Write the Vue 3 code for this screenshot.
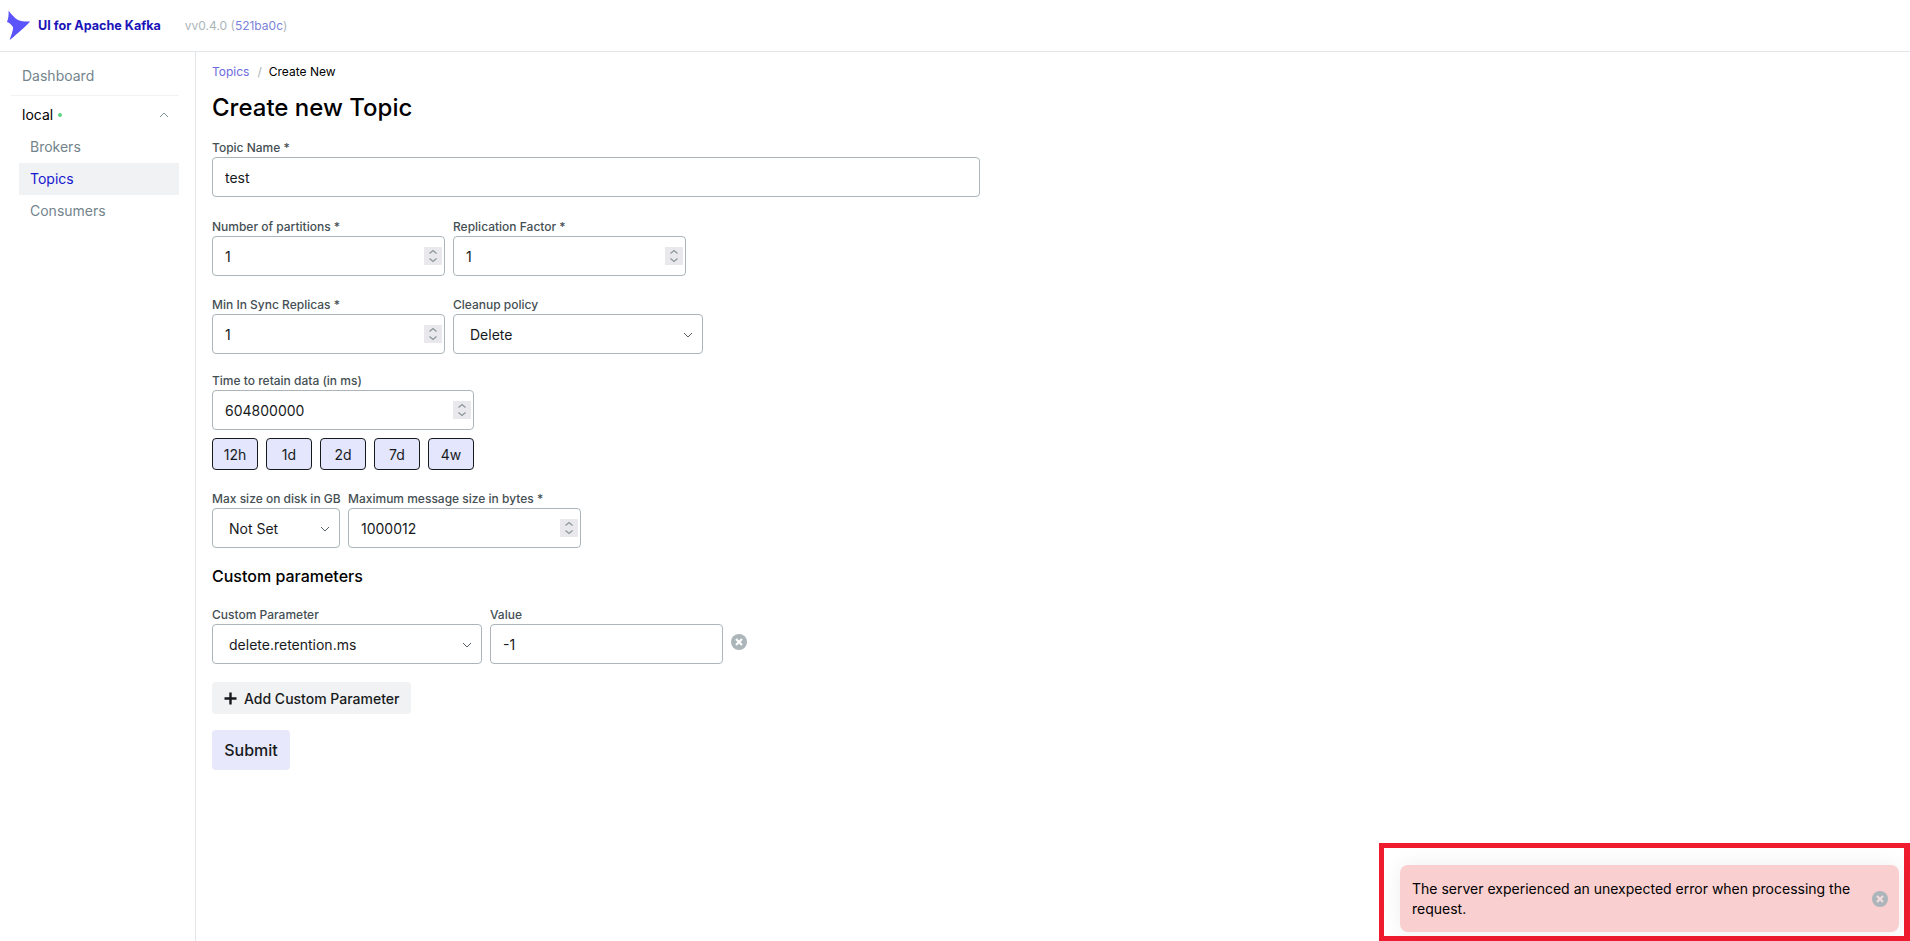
<script setup>
const durations = ['12h', '1d', '2d', '7d', '4w']
</script>

<template>
  <div class="app">
    <header class="topbar">
      <svg class="logo" viewBox="0 0 24 31" width="24" height="31">
        <path d="M1.6 0.5 C4 4 7.5 8 11 10 C15 11.5 19 11.8 23.2 11.5 C19.5 15.5 15 19.5 11 23 C8 25.5 5.5 28 2.6 30 C4 26 6 21 6.2 17.5 C4.5 14.5 2.5 13 0 12 C1.5 8.5 1.8 4.5 1.6 0.5 Z" fill="#5b53fb" />
      </svg>
      <span class="brand">UI for Apache Kafka</span>
      <span class="version">vv0.4.0 (<span class="hash">521ba0c</span>)</span>
    </header>

    <div class="body">
      <aside class="sidebar">
        <div class="nav-item dash">Dashboard</div>
        <div class="cluster">
          <span class="cluster-name">local</span>
          <span class="dot"></span>
          <svg class="chev-up" viewBox="0 0 10 6" width="10" height="6">
            <path d="M1 5 L5 1 L9 5" fill="none" stroke="#73848c" stroke-width="0.9" />
          </svg>
        </div>
        <div class="nav-item sub">Brokers</div>
        <div class="nav-item sub active">Topics</div>
        <div class="nav-item sub">Consumers</div>
      </aside>

      <main class="main">
        <nav class="crumbs">
          <a class="crumb-link">Topics</a>
          <span class="crumb-sep">/</span>
          <span class="crumb-cur">Create New</span>
        </nav>
        <h1 class="title">Create new Topic</h1>

        <form class="form">
          <div class="field r-name">
            <label class="lbl">Topic Name *</label>
            <input class="inp w-name" type="text" value="test" />
          </div>

          <div class="row r-a">
            <div class="field">
              <label class="lbl">Number of partitions *</label>
              <div class="num w-233">
                <input class="inp" type="text" value="1" />
                <span class="spin"><svg viewBox="0 0 18 18" width="18" height="18"><path d="M5.5 6.5 L9 3.5 L12.5 6.5 M5.5 11.5 L9 14.5 L12.5 11.5" fill="none" stroke="#8a9499" stroke-width="1.2" /></svg></span>
              </div>
            </div>
            <div class="field">
              <label class="lbl">Replication Factor *</label>
              <div class="num w-233">
                <input class="inp" type="text" value="1" />
                <span class="spin"><svg viewBox="0 0 18 18" width="18" height="18"><path d="M5.5 6.5 L9 3.5 L12.5 6.5 M5.5 11.5 L9 14.5 L12.5 11.5" fill="none" stroke="#8a9499" stroke-width="1.2" /></svg></span>
              </div>
            </div>
          </div>

          <div class="row r-b">
            <div class="field">
              <label class="lbl">Min In Sync Replicas *</label>
              <div class="num w-233">
                <input class="inp" type="text" value="1" />
                <span class="spin"><svg viewBox="0 0 18 18" width="18" height="18"><path d="M5.5 6.5 L9 3.5 L12.5 6.5 M5.5 11.5 L9 14.5 L12.5 11.5" fill="none" stroke="#8a9499" stroke-width="1.2" /></svg></span>
              </div>
            </div>
            <div class="field">
              <label class="lbl">Cleanup policy</label>
              <div class="sel w-250">
                <span>Delete</span>
                <svg class="chev" viewBox="0 0 10 6" width="10" height="6"><path d="M1 1 L5 5 L9 1" fill="none" stroke="#454f54" stroke-width="0.9" /></svg>
              </div>
            </div>
          </div>

          <div class="field r-c">
            <label class="lbl">Time to retain data (in ms)</label>
            <div class="num w-262">
              <input class="inp" type="text" value="604800000" />
              <span class="spin"><svg viewBox="0 0 18 18" width="18" height="18"><path d="M5.5 6.5 L9 3.5 L12.5 6.5 M5.5 11.5 L9 14.5 L12.5 11.5" fill="none" stroke="#8a9499" stroke-width="1.2" /></svg></span>
            </div>
          </div>
          <div class="durations">
            <button v-for="d in durations" :key="d" type="button" class="dur">{{ d }}</button>
          </div>

          <div class="row r-d">
            <div class="field w-128">
              <label class="lbl">Max size on disk in GB</label>
              <div class="sel">
                <span>Not Set</span>
                <svg class="chev" viewBox="0 0 10 6" width="10" height="6"><path d="M1 1 L5 5 L9 1" fill="none" stroke="#454f54" stroke-width="0.9" /></svg>
              </div>
            </div>
            <div class="field">
              <label class="lbl">Maximum message size in bytes *</label>
              <div class="num w-233">
                <input class="inp" type="text" value="1000012" />
                <span class="spin"><svg viewBox="0 0 18 18" width="18" height="18"><path d="M5.5 6.5 L9 3.5 L12.5 6.5 M5.5 11.5 L9 14.5 L12.5 11.5" fill="none" stroke="#8a9499" stroke-width="1.2" /></svg></span>
              </div>
            </div>
          </div>

          <h2 class="subtitle">Custom parameters</h2>

          <div class="row r-e">
            <div class="field">
              <label class="lbl">Custom Parameter</label>
              <div class="sel w-270">
                <span>delete.retention.ms</span>
                <svg class="chev" viewBox="0 0 10 6" width="10" height="6"><path d="M1 1 L5 5 L9 1" fill="none" stroke="#454f54" stroke-width="0.9" /></svg>
              </div>
            </div>
            <div class="field">
              <label class="lbl">Value</label>
              <input class="inp w-233" type="text" value="-1" />
            </div>
            <svg class="remove" viewBox="0 0 16 16" width="16" height="16">
              <circle cx="8" cy="8" r="8" fill="#abb5ba" />
              <path d="M5 5 L11 11 M11 5 L5 11" stroke="#fff" stroke-width="2.2" />
            </svg>
          </div>

          <button type="button" class="add">
            <svg class="plus" viewBox="0 0 13 13" width="13" height="13"><path d="M6.5 0.5 V12.5 M0.5 6.5 H12.5" stroke="#171a1c" stroke-width="2.4" /></svg>
            <span>Add Custom Parameter</span>
          </button>

          <button type="button" class="submit">Submit</button>
        </form>
      </main>
    </div>

    <div class="annot">
      <div class="toast">
        <p class="toast-text">The server experienced an unexpected error when processing the request.</p>
        <svg class="toast-x" viewBox="0 0 16 16" width="16" height="16">
          <circle cx="8" cy="8" r="8" fill="#abb5ba" />
          <path d="M5 5 L11 11 M11 5 L5 11" stroke="#f4dcdd" stroke-width="2.2" />
        </svg>
      </div>
    </div>
  </div>
</template>

<style scoped>
.app {
  height: 941px;
  display: flex;
  flex-direction: column;
  position: relative;
  overflow: hidden;
  background: #fff;
  color: #171a1c;
  font-family: Inter, "Noto Sans", sans-serif;
}
.topbar {
  height: 51px;
  flex: none;
  border-bottom: 1px solid #e3e6e8;
  display: flex;
  align-items: center;
  padding-left: 7px;
}
.logo { flex: none; }
.brand {
  margin-left: 7px;
  font-size: 12.6px;
  font-weight: 700;
  color: #1a14b8;
  white-space: nowrap;
}
.version {
  margin-left: 24px;
  font-size: 12px;
  color: #abb5ba;
  white-space: nowrap;
}
.hash { color: #7b82d8; }

.body { flex: 1; display: flex; min-height: 0; }
.sidebar {
  flex: none;
  width: 196px;
  box-sizing: border-box;
  border-right: 1px solid #e3e6e8;
  padding: 8px 16px 0 11px;
}
.nav-item {
  height: 32px;
  line-height: 32px;
  font-size: 14px;
  color: #73848c;
  white-space: nowrap;
}
.dash {
  padding-left: 11px;
  height: 35px;
  line-height: 32px;
  border-bottom: 1px solid #f1f2f3;
}
.cluster {
  height: 33px;
  margin-top: 2px;
  display: flex;
  align-items: center;
  padding-left: 11px;
  font-size: 14px;
  font-weight: 400;
}
.cluster-name { color: #000; }
.dot {
  width: 4px;
  height: 4px;
  border-radius: 50%;
  background: #5cd685;
  margin-left: 5px;
}
.chev-up { margin-left: auto; margin-right: 10px; }
.sub { margin-left: 8px; padding-left: 11px; }
.active { background: #f1f2f3; color: #1717cf; }

.main { flex: 1; padding: 12px 16px 0; min-width: 0; }
.crumbs {
  height: 16px;
  font-size: 12px;
  line-height: 16px;
  display: flex;
  align-items: center;
}
.crumb-link { color: #6b6bdc; }
.crumb-sep { color: #abb5ba; margin: 0 7px 0 8px; }
.crumb-cur { color: #000; }
.title {
  margin: 12px 0 0;
  font-size: 24px;
  line-height: 32px;
  font-weight: 500;
  color: #000;
}
.form { display: flex; flex-direction: column; align-items: flex-start; }
.field { display: flex; flex-direction: column; }
.row { display: flex; gap: 8px; }
.r-name { margin-top: 15px; }
.r-a { margin-top: 21px; }
.r-b { margin-top: 20px; }
.r-c { margin-top: 18px; }
.r-d { margin-top: 20px; }
.r-e { margin-top: 18px; }
.lbl {
  height: 17px;
  line-height: 18px;
  margin-bottom: 1px;
  font-size: 12px;
  font-weight: 500;
  color: #454f54;
  white-space: nowrap;
}
.inp {
  display: block;
  box-sizing: border-box;
  height: 40px;
  width: 100%;
  border: 1px solid #abb5ba;
  border-radius: 4px;
  padding: 0 12px;
  font: 400 14px Inter, "Noto Sans", sans-serif;
  color: #171a1c;
  background: #fff;
  outline: none;
}
.w-name { width: 768px; }
.w-233 { width: 233px; }
.w-262 { width: 262px; }
.w-250 { width: 250px; }
.w-128 { width: 128px; }
.w-270 { width: 270px; }
.num { position: relative; }
.spin {
  position: absolute;
  right: 3px;
  top: 11px;
  width: 18px;
  height: 18px;
  background: #e9e9ed;
  display: flex;
}
.sel {
  box-sizing: border-box;
  height: 40px;
  border: 1px solid #abb5ba;
  border-radius: 4px;
  padding: 0 9px 0 16px;
  display: flex;
  align-items: center;
  justify-content: space-between;
  font-size: 14px;
  color: #171a1c;
  white-space: nowrap;
}
.chev { flex: none; margin-top: 1px; }
.durations { display: flex; gap: 8px; margin-top: 8px; }
.dur {
  width: 46px;
  height: 32px;
  box-sizing: border-box;
  border: 1px solid #171a1c;
  border-radius: 4px;
  background: #e3e6fc;
  font: 400 14px Inter, "Noto Sans", sans-serif;
  color: #171a1c;
  padding: 0;
}
.subtitle {
  margin: 16px 0 0;
  font-size: 16px;
  line-height: 24px;
  font-weight: 500;
  color: #000;
}
.remove { flex: none; align-self: flex-start; margin-top: 28px; }
.add {
  margin-top: 18px;
  height: 32px;
  width: 199px;
  box-sizing: border-box;
  border: none;
  border-radius: 4px;
  background: #f1f2f3;
  padding: 0 0 0 12px;
  display: flex;
  align-items: center;
  gap: 7px;
  font: 500 14px Inter, "Noto Sans", sans-serif;
  color: #171a1c;
  white-space: nowrap;
}
.plus { flex: none; }
.submit {
  margin-top: 16px;
  width: 78px;
  height: 40px;
  border: none;
  border-radius: 4px;
  background: #e8e8fc;
  font: 500 16px Inter, "Noto Sans", sans-serif;
  color: #171a1c;
  padding: 0;
}

.annot {
  position: absolute;
  left: 1379px;
  top: 843px;
  width: 531px;
  height: 98px;
  box-sizing: border-box;
  border: 5px solid #ee1c2e;
  border-right-width: 6px;
}
.toast {
  position: absolute;
  left: 16px;
  top: 17px;
  width: 499px;
  height: 67px;
  box-sizing: border-box;
  background: #f9cfd0;
  border-radius: 8px;
  box-shadow: 0 0 20px rgba(0, 0, 0, 0.07);
  padding: 0 11px 0 12px;
  display: flex;
  align-items: center;
  gap: 10px;
}
.toast-text {
  margin: 0;
  flex: 1;
  font-size: 14px;
  line-height: 20px;
  font-weight: 400;
  color: #000;
}
.toast-x { flex: none; }
</style>
